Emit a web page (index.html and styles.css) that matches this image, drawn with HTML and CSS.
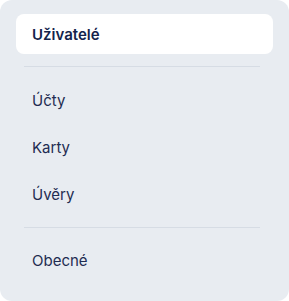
FILE: index.html
```html
<!DOCTYPE html>
<html lang="cs">
<head>
  <meta charset="UTF-8">
  <meta name="viewport" content="width=device-width, initial-scale=1.0">
  <title>Nastavení</title>
  <link rel="stylesheet" href="styles.css">
</head>

<body>
  <nav class="panel">
    <a class="item active" href="#">Uživatelé</a>
    <div class="divider"></div>
    <div class="group">
      <a class="item" href="#">Účty</a>
      <a class="item" href="#">Karty</a>
      <a class="item" href="#">Úvěry</a>
    </div>
    <div class="divider"></div>
    <a class="item" href="#">Obecné</a>
  </nav>
</body>

</html>
```

FILE: styles.css
```css
body {
  margin: 0;
  background-color: #ffffff;
  font-family: Inter, "Noto Sans", sans-serif;
}

.panel {
  display: flex;
  flex-direction: column;
  box-sizing: border-box;
  width: 289px;
  height: 301px;
  padding: 14px 16px;
  background-color: #e8ecf1;
  border-radius: 12px;
}

.group {
  display: flex;
  flex-direction: column;
  gap: 7px;
}

.item {
  display: flex;
  align-items: center;
  height: 40px;
  padding-left: 16px;
  font-size: 15px;
  color: #1f2c52;
  text-decoration: none;
  border-radius: 8px;
}

.active {
  background-color: #ffffff;
  font-weight: 600;
  color: #13234b;
}

.divider {
  height: 1px;
  margin: 12px 13px 13px 8px;
  background-color: #d6dce4;
}

.divider:last-of-type {
  margin: 13px 13px 12px 8px;
}
```
